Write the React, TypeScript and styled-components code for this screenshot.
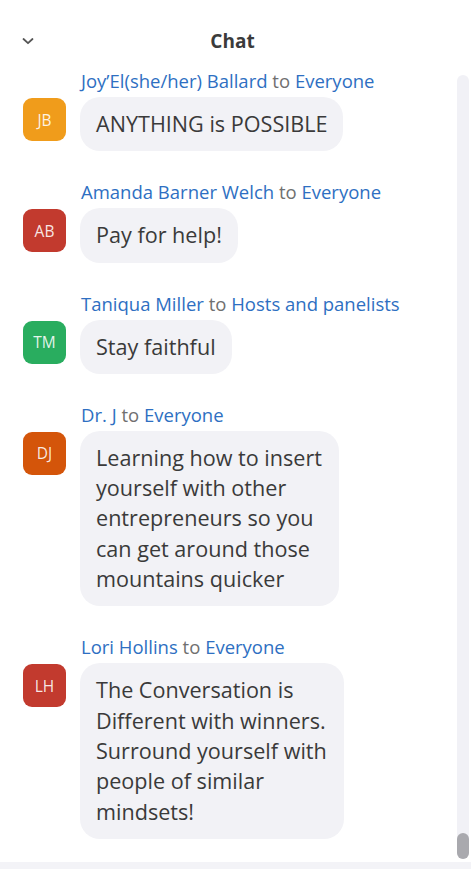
import styled, { createGlobalStyle } from "styled-components";

const GlobalStyle = createGlobalStyle`
  html, body {
    margin: 0;
    padding: 0;
    background: #ffffff;
    font-family: "Segoe UI", "Open Sans", "Noto Sans", sans-serif;
  }
  * { box-sizing: border-box; }
`;

type Message = {
  initials: string;
  color: string;
  name: string;
  to: string;
  text: string;
  width?: number;
};

const messages: Message[] = [
  {
    initials: "JB",
    color: "#f09c1b",
    name: "Joy’El(she/her) Ballard",
    to: "Everyone",
    text: "ANYTHING is POSSIBLE",
  },
  {
    initials: "AB",
    color: "#c23a2e",
    name: "Amanda Barner Welch",
    to: "Everyone",
    text: "Pay for help!",
  },
  {
    initials: "TM",
    color: "#29ad5f",
    name: "Taniqua Miller",
    to: "Hosts and panelists",
    text: "Stay faithful",
  },
  {
    initials: "DJ",
    color: "#d4550a",
    name: "Dr. J",
    to: "Everyone",
    text: "Learning how to insert yourself with other entrepreneurs so you can get around those mountains quicker",
    width: 259,
  },
  {
    initials: "LH",
    color: "#c23a2e",
    name: "Lori Hollins",
    to: "Everyone",
    text: "The Conversation is Different with winners. Surround yourself with people of similar mindsets!",
    width: 264,
  },
];

function App() {
  return (
    <>
      <GlobalStyle />
      <Panel>
        <Header>
          <Collapse aria-label="collapse">
            <svg width="14" height="10" viewBox="0 0 14 10">
              <path
                d="M2.5 3 L7 7.2 L11.5 3"
                fill="none"
                stroke="#555"
                strokeWidth="1.8"
                strokeLinecap="round"
                strokeLinejoin="round"
              />
            </svg>
          </Collapse>
          <Title>Chat</Title>
        </Header>
        <Body>
          <List>
            {messages.map((m) => (
              <Item key={m.initials + m.name}>
                <Sender>
                  <Name>{m.name}</Name> <To>to</To> <Name>{m.to}</Name>
                </Sender>
                <Avatar $bg={m.color}>{m.initials}</Avatar>
                <Bubble $max={m.width ?? 272}>{m.text}</Bubble>
              </Item>
            ))}
          </List>
          <Track>
            <Thumb />
          </Track>
        </Body>
        <Footer />
      </Panel>
    </>
  );
}

export default App;

const Panel = styled.div`
  display: flex;
  flex-direction: column;
  height: 869px;
  overflow: hidden;
`;

const Header = styled.div`
  position: relative;
  height: 66px;
  display: flex;
  justify-content: center;
  padding-top: 28px;
`;

const Collapse = styled.button`
  position: absolute;
  left: 21px;
  top: 36px;
  border: none;
  background: none;
  padding: 0;
  display: flex;
`;

const Title = styled.div`
  font-size: 19px;
  font-weight: 700;
  line-height: 26px;
  color: #3b3b3b;
  margin-right: 6px;
`;

const Body = styled.div`
  flex: 1;
  display: flex;
  min-height: 0;
`;

const List = styled.div`
  flex: 1;
  padding: 4px 0 0 23px;
  display: flex;
  flex-direction: column;
  gap: 30px;
  overflow: hidden;
`;

const Item = styled.div`
  display: grid;
  grid-template-columns: 57px auto;
  grid-template-rows: auto auto;
  row-gap: 5px;
  justify-items: start;
  align-items: start;
`;

const Sender = styled.div`
  grid-column: 2;
  font-size: 18.5px;
  line-height: 22px;
  padding-left: 1px;
  white-space: nowrap;
`;

const Name = styled.span`
  color: #2e6fc2;
`;

const To = styled.span`
  color: #707070;
`;

const Avatar = styled.div<{ $bg: string }>`
  grid-column: 1;
  margin-top: 1px;
  width: 43px;
  height: 43px;
  border-radius: 9px;
  background: ${(p) => p.$bg};
  color: #ffffffe0;
  font-size: 15.5px;
  display: flex;
  align-items: center;
  justify-content: center;
`;

const Bubble = styled.div<{ $max: number }>`
  grid-column: 2;
  max-width: ${(p) => p.$max}px;
  padding: 12px 16px;
  border-radius: 20px;
  background: #f2f2f6;
  color: #3a3a3a;
  font-size: 21.6px;
  line-height: 30.3px;
`;

const Track = styled.div`
  width: 12px;
  margin: 9px 2px 3px 0;
  border-radius: 6px;
  background: #f1f1f6;
  display: flex;
  flex-direction: column;
  justify-content: flex-end;
`;

const Thumb = styled.div`
  height: 26px;
  border-radius: 6px;
  background: #a9a9ae;
`;

const Footer = styled.div`
  height: 7px;
  background: #f3f3f7;
`;
